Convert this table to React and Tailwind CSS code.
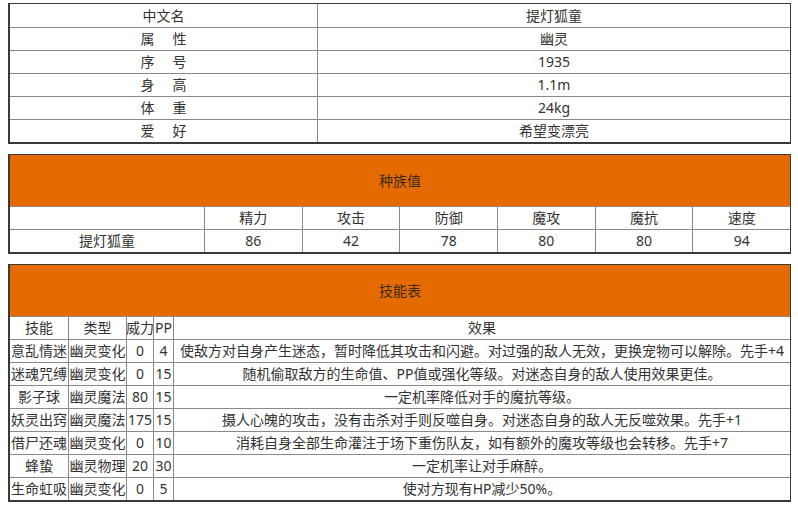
import React from "react";

const info = [
  { label: ["中文名"], value: "提灯狐童" },
  { label: ["属", "性"], value: "幽灵" },
  { label: ["序", "号"], value: "1935" },
  { label: ["身", "高"], value: "1.1m" },
  { label: ["体", "重"], value: "24kg" },
  { label: ["爱", "好"], value: "希望变漂亮" },
];

const statNames = ["精力", "攻击", "防御", "魔攻", "魔抗", "速度"];
const statValues = [86, 42, 78, 80, 80, 94];

const skills = [
  ["意乱情迷", "幽灵变化", "0", "4", "使敌方对自身产生迷态，暂时降低其攻击和闪避。对过强的敌人无效，更换宠物可以解除。先手+4"],
  ["迷魂咒缚", "幽灵变化", "0", "15", "随机偷取敌方的生命值、PP值或强化等级。对迷态自身的敌人使用效果更佳。"],
  ["影子球", "幽灵魔法", "80", "15", "一定机率降低对手的魔抗等级。"],
  ["妖灵出窍", "幽灵魔法", "175", "15", "摄人心魄的攻击，没有击杀对手则反噬自身。对迷态自身的敌人无反噬效果。先手+1"],
  ["借尸还魂", "幽灵变化", "0", "10", "消耗自身全部生命灌注于场下重伤队友，如有额外的魔攻等级也会转移。先手+7"],
  ["蜂蛰", "幽灵物理", "20", "30", "一定机率让对手麻醉。"],
  ["生命虹吸", "幽灵变化", "0", "5", "使对方现有HP减少50%。"],
];

const box = "border-t border-r border-l-2 border-b-2 border-[#3a3a3a] bg-white";
const row = "flex h-[23px] border-t border-[#8a8a8a]";
const cell = "flex items-center justify-center border-l border-[#8a8a8a] whitespace-nowrap";

export default function App() {
  return (
    <div className="min-h-screen bg-white pt-[3px] pl-[8px] text-sm text-[#333] font-['Noto_Sans','Noto_Sans_CJK_SC',sans-serif]">
      <div className="w-[783px] flex flex-col gap-[10px]">
        {/* basic info */}
        <div className={box}>
          {info.map((r, i) => (
            <div key={i} className={i === 0 ? "flex h-[23px]" : row}>
              <div className="w-[307px] flex items-center justify-center">
                {r.label.length === 1 ? (
                  r.label[0]
                ) : (
                  <>
                    {r.label[0]}
                    <span className="inline-block w-[18px]" />
                    {r.label[1]}
                  </>
                )}
              </div>
              <div className={cell + " flex-1"}>{r.value}</div>
            </div>
          ))}
        </div>

        {/* stats */}
        <div className={box}>
          <div className="h-[51px] bg-[#e56a00] flex items-center justify-center text-[#3b2a1a]">
            种族值
          </div>
          <div className={row}>
            <div className="w-[194px]" />
            {statNames.map((n) => (
              <div key={n} className={cell + " flex-1"}>
                {n}
              </div>
            ))}
          </div>
          <div className={row}>
            <div className="w-[194px] flex items-center justify-center">提灯狐童</div>
            {statValues.map((v, i) => (
              <div key={i} className={cell + " flex-1"}>
                {v}
              </div>
            ))}
          </div>
        </div>

        {/* skills */}
        <div className={box}>
          <div className="h-[51px] bg-[#e56a00] flex items-center justify-center text-[#3b2a1a]">
            技能表
          </div>
          <div className={row}>
            <div className="w-[58px] flex items-center justify-center">技能</div>
            <div className={cell + " w-[58px]"}>类型</div>
            <div className={cell + " w-[27px]"}>威力</div>
            <div className={cell + " w-[20px]"}>PP</div>
            <div className={cell + " flex-1"}>效果</div>
          </div>
          {skills.map((s, i) => (
            <div key={i} className={row}>
              <div className="w-[58px] flex items-center justify-center whitespace-nowrap">{s[0]}</div>
              <div className={cell + " w-[58px]"}>{s[1]}</div>
              <div className={cell + " w-[27px]"}>{s[2]}</div>
              <div className={cell + " w-[20px]"}>{s[3]}</div>
              <div className={cell + " flex-1"}>{s[4]}</div>
            </div>
          ))}
        </div>
      </div>
    </div>
  );
}
